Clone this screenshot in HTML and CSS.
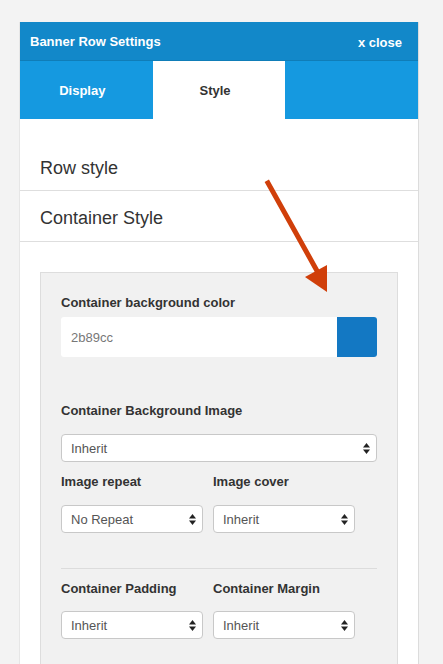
FILE: index.html
```html
<!DOCTYPE html>
<html>
<head>
<meta charset="utf-8">
<link rel="stylesheet" href="styles.css">
</head>
<body>
<div class="panel">
  <div class="header">
    <span class="title">Banner Row Settings</span>
    <span class="close">x close</span>
  </div>
  <div class="tabs">
    <div class="tab">Display</div>
    <div class="tab active">Style</div>
    <div class="tab"></div>
  </div>
  <div class="body">
    <div class="section">Row style</div>
    <div class="section">Container Style</div>
    <div class="box">
      <div class="label">Container background color</div>
      <div class="color-input">
        <span class="hex">2b89cc</span>
        <span class="swatch"></span>
      </div>
      <div class="label gap-lg">Container Background Image</div>
      <select class="select full"><option>Inherit</option></select>
      <div class="row">
        <div class="col">
          <div class="label">Image repeat</div>
          <select class="select"><option>No Repeat</option></select>
        </div>
        <div class="col">
          <div class="label">Image cover</div>
          <select class="select"><option>Inherit</option></select>
        </div>
      </div>
      <hr class="sep">
      <div class="row tight">
        <div class="col">
          <div class="label">Container Padding</div>
          <select class="select"><option>Inherit</option></select>
        </div>
        <div class="col">
          <div class="label">Container Margin</div>
          <select class="select"><option>Inherit</option></select>
        </div>
      </div>
    </div>
  </div>
  <svg class="arrow" width="80" height="120" viewBox="0 0 80 120">
    <line x1="4" y1="4" x2="52" y2="90" stroke="#d03f0a" stroke-width="5" stroke-linecap="square"/>
    <polygon points="41,98 63,86 63,113" fill="#d03f0a"/>
  </svg>
</div>
</body>
</html>
```
FILE: styles.css
```css
html, body {
  margin: 0;
  padding: 0;
  background: #f3f3f3;
  font-family: "Liberation Sans", Arial, sans-serif;
  overflow: hidden;
}
.panel {
  position: relative;
  margin: 22px 0 0 20px;
  width: 398px;
  height: 642px;
  overflow: hidden;
  background: #fff;
  box-shadow: 1px 0 0 #dcdcdc, -1px 0 0 #e6e6e6;
}
.header {
  height: 39px;
  background: #1288c9;
  display: flex;
  align-items: center;
  justify-content: space-between;
  padding: 0 16px 0 10px;
  color: #fff;
  font-weight: bold;
  font-size: 13px;
  box-shadow: inset 0 -1px 0 #0f7db8;
}
.close { font-size: 13px; padding-top: 2px; }
.tabs {
  display: flex;
  height: 58px;
  background: #1599e0;
}
.tab {
  flex: 1;
  display: flex;
  align-items: center;
  justify-content: center;
  padding-right: 8px;
  color: #fff;
  font-weight: bold;
  font-size: 13px;
}
.tab.active {
  background: #fff;
  color: #333;
}
.body {
  padding-top: 22px;
}
.section {
  height: 50px;
  box-sizing: border-box;
  padding-top: 5px;
  border-bottom: 1px solid #dedede;
  padding-left: 20px;
  display: flex;
  align-items: center;
  font-size: 18px;
  color: #333;
}
.section + .section { height: 51px; }
.box {
  margin: 30px 20px 0 20px;
  background: #f1f1f1;
  border: 1px solid #dddddd;
  padding: 21px 20px 40px 20px;
  height: 420px;
}
.label {
  font-size: 13px;
  font-weight: bold;
  color: #333;
  line-height: 17px;
  margin-bottom: 6px;
}
.gap-lg { margin-top: 45px; margin-bottom: 15px; }
.color-input {
  display: flex;
  height: 40px;
  background: #fff;
  border-radius: 3px;
  overflow: hidden;
}
.hex {
  flex: 1;
  display: flex;
  align-items: center;
  padding-left: 10px;
  font-size: 13px;
  color: #777;
}
.swatch {
  width: 40px;
  background: #1378c3;
}
.select {
  appearance: none;
  -webkit-appearance: none;
  display: block;
  height: 28px;
  width: 142px;
  margin: 0;
  border: 1px solid #c8c8c8;
  border-radius: 4px;
  background: #fff url("data:image/svg+xml;utf8,<svg xmlns='http://www.w3.org/2000/svg' width='7' height='11'><polygon points='0,4.5 3.5,0 7,4.5' fill='%23222'/><polygon points='0,6.5 7,6.5 3.5,11' fill='%23222'/></svg>") no-repeat right 6px center;
  padding: 0 20px 0 9px;
  font-family: "Liberation Sans", Arial, sans-serif;
  font-size: 13px;
  color: #555;
  box-sizing: border-box;
}
.select.full { width: 100%; }
.row {
  display: flex;
  gap: 10px;
  margin-top: 11px;
}
.row .label { margin-bottom: 15px; }
.col { width: 142px; }
.sep {
  border: 0;
  border-top: 1px solid #dcdcdc;
  margin: 35px 0 0 0;
}
.row.tight { margin-top: 11px; }
.row.tight .label { margin-bottom: 14px; }
.arrow {
  position: absolute;
  left: 244px;
  top: 157px;
}
```
